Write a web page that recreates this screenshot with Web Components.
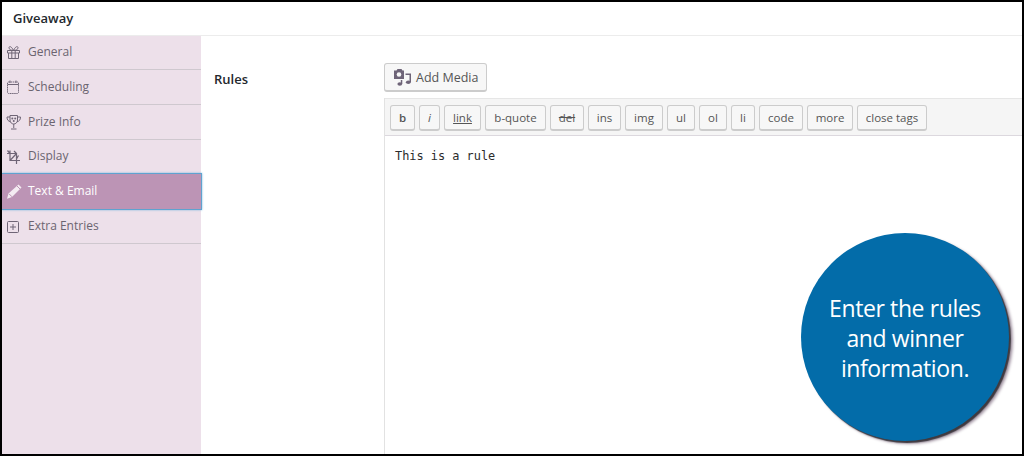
<!DOCTYPE html>
<html>
<head>
<meta charset="utf-8">
<title>Giveaway</title>
<style>
  html, body { margin: 0; padding: 0; background: #fff; }
  body { width: 1024px; height: 456px; overflow: hidden; font-family: "Open Sans", sans-serif; }
</style>
</head>
<body>
<giveaway-app>
  <side-tab icon="gift">General</side-tab>
  <side-tab icon="calendar">Scheduling</side-tab>
  <side-tab icon="trophy">Prize Info</side-tab>
  <side-tab icon="crop">Display</side-tab>
  <side-tab icon="pencil" active>Text &amp; Email</side-tab>
  <side-tab icon="plus">Extra Entries</side-tab>

  <rules-editor slot="main">
    <quick-tag style="width:25px" weight="600">b</quick-tag>
    <quick-tag style="width:21px" italic>i</quick-tag>
    <quick-tag style="width:37px" deco="underline">link</quick-tag>
    <quick-tag style="width:61px">b-quote</quick-tag>
    <quick-tag style="width:34px" deco="line-through">del</quick-tag>
    <quick-tag style="width:33px">ins</quick-tag>
    <quick-tag style="width:38px">img</quick-tag>
    <quick-tag style="width:28px">ul</quick-tag>
    <quick-tag style="width:28px">ol</quick-tag>
    <quick-tag style="width:24px">li</quick-tag>
    <quick-tag style="width:44px">code</quick-tag>
    <quick-tag style="width:46px">more</quick-tag>
    <quick-tag style="width:70px">close tags</quick-tag>
  </rules-editor>

  <callout-badge slot="overlay">Enter the rules<br>and winner<br>information.</callout-badge>
</giveaway-app>

<script>
const ICONS = {
  gift: '<path d="M1.500 5.500h12v2.500h-12zM2.500 8v5.500h10V8M5.800 5.500v8M9.200 5.500v8M7.500 5.500C6 2 3.500 .5 3 2.500 2.600 4.300 5.200 5.500 7.500 5.500zM7.500 5.500C9 2 11.500 .5 12 2.500 12.400 4.300 9.800 5.500 7.500 5.500z"/>',
  calendar: '<rect x="1.500" y="3" width="11" height="11.500" rx="1" stroke-dasharray="1.500 .6"/><path d="M1.500 5.500h11M4 1.500V4M10 1.500V4"/>',
  trophy: '<path d="M4 1.500h7.500v4.500c0 2.500-1.800 4-3.750 4S4 8.500 4 6zM4 3H1c0 3 1.300 4.300 3.500 4.700M11.500 3h3c0 3-1.300 4.300-3.500 4.700M7.750 10v4M5 15h5.500"/><circle cx="6.300" cy="4.500" r="1" fill="#6f6576" stroke="none"/><circle cx="9.200" cy="4.500" r="1" fill="#6f6576" stroke="none"/><circle cx="7.750" cy="7" r="1" fill="#6f6576" stroke="none"/>',
  crop: '<path d="M4 1.500V11.500h10M1 4.500h9.500V15M4 11.500l6.500-7M1.500 1.500L4 4.500M8 2l2.500 2.500M12.500 6.500l-2 3.500" stroke-width="1.200"/>',
  plus: '<rect x="1.500" y="2.500" width="11" height="11" rx="1"/><path d="M7 5v6M4 8h6"/>'
};

class GiveawayApp extends HTMLElement {
  constructor() {
    super();
    this.attachShadow({ mode: 'open' });
    this.shadowRoot.innerHTML = `
      <style>
        :host {
          display: flex;
          flex-direction: column;
          position: relative;
          box-sizing: border-box;
          width: 1024px;
          height: 456px;
          border: solid #000;
          border-width: 2px;
          background: #fff;
          overflow: hidden;
          color: #3d3d44;
        }
        header {
          flex: none;
          height: 34px;
          box-sizing: border-box;
          padding: 8px 0 0 11px;
          border-bottom: 1px solid #ececec;
          font-size: 13px;
          font-weight: 600;
          line-height: 17px;
          color: #23282d;
        }
        .body { flex: 1; display: flex; min-height: 0; }
        nav {
          flex: none;
          width: 199px;
          background: #ede0ea;
          display: flex;
          flex-direction: column;
        }
        .main { flex: 1; display: flex; min-width: 0; }
        .label {
          flex: none;
          width: 170px;
          padding: 34px 0 0 13px;
          font-size: 13px;
          font-weight: 600;
          line-height: 18px;
          color: #23282d;
        }
        .editor { flex: 1; min-width: 0; display: flex; }
      </style>
      <header>Giveaway</header>
      <div class="body">
        <nav><slot></slot></nav>
        <div class="main">
          <div class="label">Rules</div>
          <div class="editor"><slot name="main"></slot></div>
        </div>
      </div>
      <slot name="overlay"></slot>
    `;
  }
}

class SideTab extends HTMLElement {
  constructor() {
    super();
    this.attachShadow({ mode: 'open' });
    const name = this.getAttribute('icon');
    const icon = name == 'pencil'
      ? '<path d="M12.500 .5l3 3-9.500 9.500-5 1.800 1.500-5.200z" fill="#f4ecf2" stroke="none"/><path d="M11 2l3 3M3 9.800l3 3" stroke="#bc94b5" stroke-width="1"/>'
      : ICONS[name];
    this.shadowRoot.innerHTML = `
      <style>
        :host {
          display: flex;
          align-items: center;
          box-sizing: border-box;
          height: 35px;
          padding-left: 4px;
          gap: 5px;
          border-bottom: 1px solid #cfc8cf;
          font-size: 12px;
          color: #6b6470;
        }
        :host(:first-child) { height: 34px; }
        :host([icon="crop"]) { height: 34px; }
        :host([icon="plus"]) { height: 34px; }
        :host([active]) {
          height: 37px;
          margin-top: -1px;
          margin-right: -1px;
          background: #bc94b5;
          color: #fff;
          border: 1px solid #5fa3d0;
          border-left: 0;
          box-shadow: 0 0 2px #7db9de;
        }
        svg { flex: none; width: 17px; height: 16px; fill: none; stroke: #6f6576; stroke-width: 1; }
        span { position: relative; top: -1px; }
      </style>
      <svg viewBox="0 0 17 16">${icon}</svg><span><slot></slot></span>
    `;
  }
}

class RulesEditor extends HTMLElement {
  constructor() {
    super();
    this.attachShadow({ mode: 'open' });
    this.shadowRoot.innerHTML = `
      <style>
        :host { display: flex; flex-direction: column; flex: 1; min-width: 0; padding-top: 27px; }
        .add {
          align-self: flex-start;
          display: flex;
          align-items: center;
          gap: 4px;
          box-sizing: border-box;
          width: 103px;
          height: 29px;
          padding-left: 8px;
          background: #f7f7f7;
          border: 1px solid #cccccc;
          border-bottom-width: 2px;
          border-radius: 3px;
          font-size: 12.500px;
          color: #555;
        }
        svg { width: 19px; height: 18px; flex: none; }
        .box {
          flex: 1;
          margin-top: 6px;
          border-left: 1px solid #e2e2e2;
          display: flex;
          flex-direction: column;
          min-height: 0;
        }
        .toolbar {
          flex: none;
          height: 38px;
          box-sizing: border-box;
          display: flex;
          gap: 4px;
          padding: 6px 0 0 5px;
          background: #f5f5f5;
          border-top: 1px solid #e6e6e6;
          border-bottom: 1px solid #dcd8de;
        }
        .text {
          padding: 12px 0 0 10px;
          font-family: "DejaVu Sans Mono", monospace;
          font-size: 11.900px;
          line-height: 16px;
          color: #2b2b2b;
        }
      </style>
      <div class="add">
        <svg viewBox="0 0 19 18" fill="#6e6478">
          <path d="M1 2.500h2.500l1-1.500h4l1 1.500H11v8.500H1z"/>
          <circle cx="6" cy="6.500" r="2.300" fill="#f7f7f7"/>
          <path d="M12.500 5.500H18V14h-1.500V7h-4z"/>
          <ellipse cx="15.300" cy="14.200" rx="2.400" ry="1.800"/>
          <path d="M7.800 12H9.300V16H7.800z"/>
          <ellipse cx="6.800" cy="16" rx="2.400" ry="1.700"/>
        </svg>
        <span>Add Media</span>
      </div>
      <div class="box">
        <div class="toolbar"><slot></slot></div>
        <div class="text">This is a rule</div>
      </div>
    `;
  }
}

class QuickTag extends HTMLElement {
  constructor() {
    super();
    this.attachShadow({ mode: 'open' });
    const weight = this.getAttribute('weight') || 400;
    const deco = this.getAttribute('deco') || 'none';
    const style = this.hasAttribute('italic') ? 'italic' : 'normal';
    this.shadowRoot.innerHTML = `
      <style>
        :host {
          display: flex;
          align-items: center;
          justify-content: center;
          box-sizing: border-box;
          height: 26px;
          background: #f7f7f7;
          border: 1px solid #cccccc;
          border-bottom-width: 2px;
          border-radius: 3px;
          font-size: 11.500px;
          color: #555;
          font-weight: ${weight};
          font-style: ${style};
          text-decoration: ${deco};
        }
      </style>
      <slot></slot>
    `;
  }
}

class CalloutBadge extends HTMLElement {
  constructor() {
    super();
    this.attachShadow({ mode: 'open' });
    this.shadowRoot.innerHTML = `
      <style>
        :host {
          position: absolute;
          left: 799px;
          top: 231px;
          width: 208px;
          height: 208px;
          box-sizing: border-box;
          padding-top: 1px;
          border-radius: 50%;
          background: #036ca9;
          box-shadow: 2px 2px 1px #3f3a40, 4px 3px 3px #a79aa8;
          display: flex;
          align-items: center;
          justify-content: center;
          text-align: center;
          font-family: "Open Sans", sans-serif;
          font-size: 23px;
          letter-spacing: -0.4px;
          line-height: 30px;
          color: #fff;
        }
      </style>
      <div><slot></slot></div>
    `;
  }
}

customElements.define('giveaway-app', GiveawayApp);
customElements.define('side-tab', SideTab);
customElements.define('rules-editor', RulesEditor);
customElements.define('quick-tag', QuickTag);
customElements.define('callout-badge', CalloutBadge);
</script>
</body>
</html>
